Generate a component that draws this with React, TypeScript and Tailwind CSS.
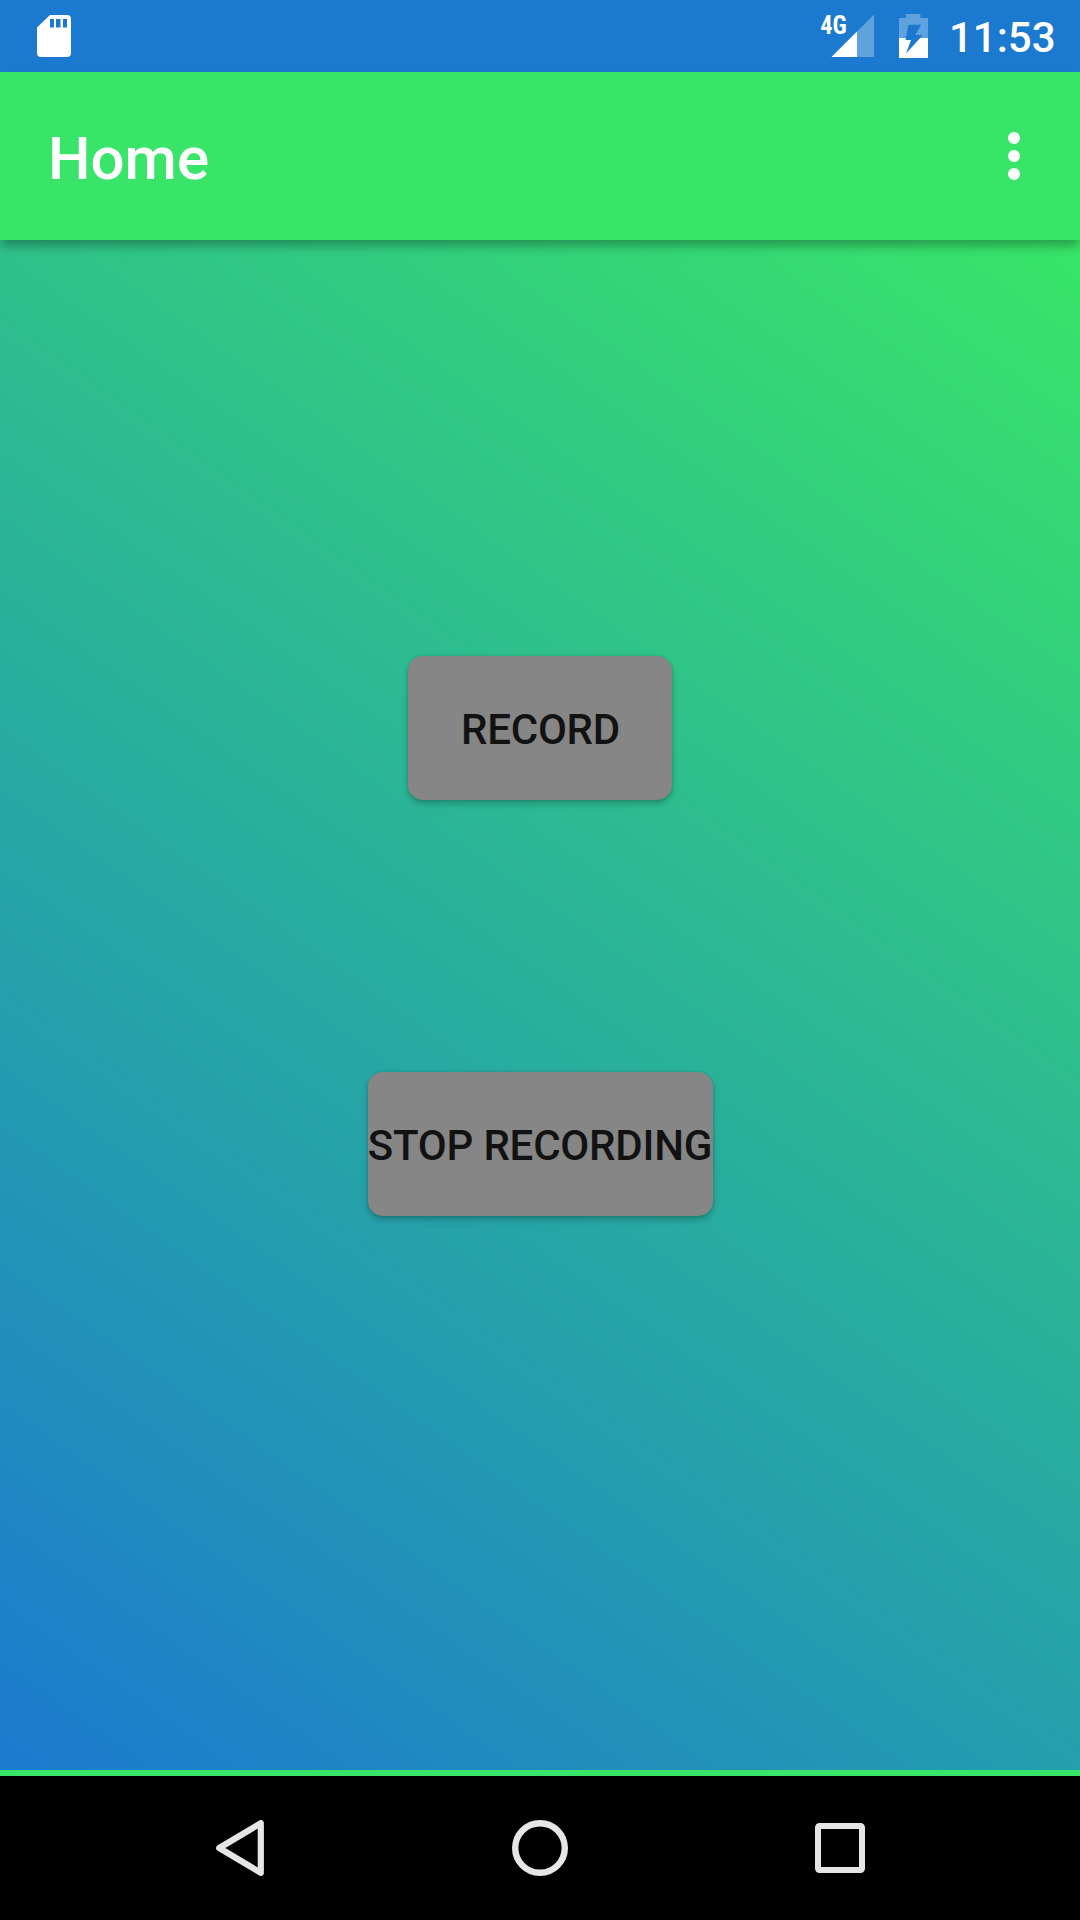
import React from "react";

function StatusBar() {
  return (
    <div className="flex h-[72px] items-start justify-between bg-[#1b7ad0] pr-[25px] pl-[37px] text-white">
      <svg className="mt-[15px] h-[42px] w-[34px]" viewBox="0 0 34 42" fill="none">
        <path
          fillRule="evenodd"
          fill="#fff"
          d="M13 0H30a4 4 0 0 1 4 4V38a4 4 0 0 1-4 4H4a4 4 0 0 1-4-4V12.500zM13 4V12.500H17V4zM19 4V12.500H23.500V4zM26 4V12.500H30V4z"
        />
      </svg>
      <div className="flex items-start">
        <svg className="h-[60px] w-[55px]" viewBox="820 0 55 60">
          <path d="M874 14.500V57H831.500z" fill="#fff" fillOpacity=".3" />
          <path d="M857 31.500V57H831.500z" fill="#fff" />
          <text
            x="820.3"
            y="33.600"
            fill="#fff"
            fontFamily="'Roboto Condensed', Roboto, sans-serif"
            fontSize="25"
            fontWeight="700"
            textLength="26.500"
            lengthAdjust="spacingAndGlyphs"
          >
            4G
          </text>
        </svg>
        <svg className="ml-[24px] h-[60px] w-[29px]" viewBox="899 0 29 60">
          <path
            fill="#fff"
            fillOpacity=".3"
            d="M899 18H906V14H920.500V18H928V38H920.200L922.700 35H915.200L921.200 24.800H908.500L905.800 38H899z"
          />
          <path fill="#fff" d="M899 38H905.700V40H911L906 53.500L920.200 38H928V58H899z" />
        </svg>
        <span className="ml-[21px] w-[106px] text-[42px] leading-[75px] font-medium whitespace-nowrap">
          11:53
        </span>
      </div>
    </div>
  );
}

function AppBar() {
  return (
    <header className="relative z-10 flex h-[168px] items-center justify-between bg-[#38e568] pr-[60px] pl-[48px] shadow-[0_7px_10px_-1px_rgba(0,0,0,0.30)]">
      <h1 className="pt-[5px] text-[60px] leading-[70px] font-medium text-white">Home</h1>
      <button aria-label="More options" className="flex flex-col gap-[6px]">
        <span className="size-3 rounded-full bg-white" />
        <span className="size-3 rounded-full bg-white" />
        <span className="size-3 rounded-full bg-white" />
      </button>
    </header>
  );
}

function NavBar() {
  return (
    <nav className="flex h-[144px] items-start justify-between bg-black pt-[44px] pr-[215px] pl-[216px]">
      <svg className="h-[56px] w-[48px]" viewBox="0 0 48 56">
        <path d="M44.800 3.200V52.800L3.200 28z" fill="none" stroke="#e6e6e6" strokeWidth="6.200" strokeLinejoin="round" />
      </svg>
      <svg className="ml-[1px] h-[56px] w-[56px]" viewBox="0 0 56 56">
        <circle cx="28" cy="28" r="24.800" fill="none" stroke="#e6e6e6" strokeWidth="6.400" />
      </svg>
      <svg className="mt-[3px] h-[50px] w-[50px]" viewBox="0 0 50 50">
        <rect x="3" y="3" width="44" height="44" rx="1.500" fill="none" stroke="#e6e6e6" strokeWidth="6" />
      </svg>
    </nav>
  );
}

const buttonClass =
  "flex h-[144px] items-center justify-center rounded-[15px] bg-[#868686] pt-[2px] text-[42px] font-medium tracking-[-0.2px] whitespace-nowrap text-[#121212] shadow-[0_4px_6px_rgba(0,0,0,0.22),0_0_3px_rgba(0,0,0,0.14)]";

export default function App() {
  return (
    <div className="flex h-[1920px] w-[1080px] flex-col overflow-hidden font-['Roboto',sans-serif]">
      <StatusBar />
      <AppBar />
      <main className="flex h-[1530px] flex-col items-center gap-[272px] bg-[linear-gradient(35.218deg,#1b7ad0,#38e568)] pt-[416px]">
        <button className={`${buttonClass} w-[264px] pl-[1px]`}>RECORD</button>
        <button className={`${buttonClass} w-[345px]`}>STOP RECORDING</button>
      </main>
      <div className="h-[6px] bg-[#38e568]" />
      <NavBar />
    </div>
  );
}
